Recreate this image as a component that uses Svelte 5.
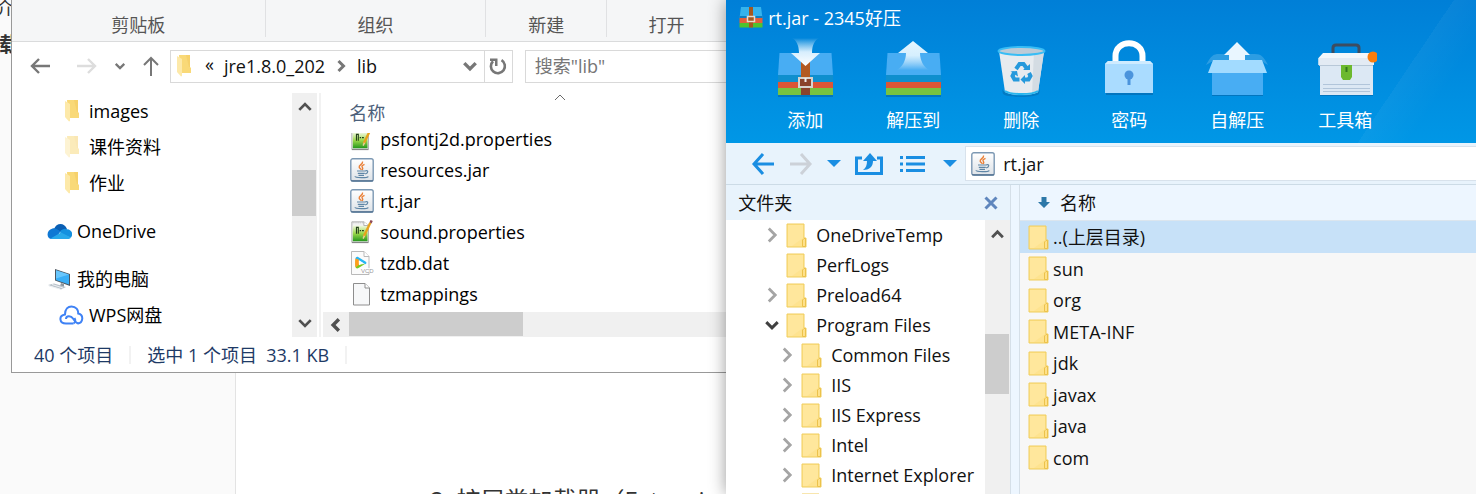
<script>
  const ribbonGroups = [
    { name: '剪贴板', grow: 254 },
    { name: '组织', grow: 221 },
    { name: '新建', grow: 120 },
    { name: '打开', grow: 120 }
  ];
  const places = [
    { name: 'images', icon: 'folder', level: 2 },
    { name: '课件资料', icon: 'folder', level: 2, faded: true },
    { name: '作业', icon: 'folder', level: 2 },
    { name: 'OneDrive', icon: 'onedrive', level: 1, root: true },
    { name: '我的电脑', icon: 'computer', level: 1, root: true },
    { name: 'WPS网盘', icon: 'wps', level: 2 }
  ];
  const files = [
    { name: 'psfontj2d.properties', icon: 'props' },
    { name: 'resources.jar', icon: 'java' },
    { name: 'rt.jar', icon: 'java' },
    { name: 'sound.properties', icon: 'props' },
    { name: 'tzdb.dat', icon: 'video' },
    { name: 'tzmappings', icon: 'page' }
  ];
  const tools = [
    { name: '添加', icon: 'add' },
    { name: '解压到', icon: 'extract' },
    { name: '删除', icon: 'bin' },
    { name: '密码', icon: 'lock' },
    { name: '自解压', icon: 'sfx' },
    { name: '工具箱', icon: 'toolbox' }
  ];
  const tree = [
    { name: 'OneDriveTemp', state: 'closed' },
    { name: 'PerfLogs', state: 'leaf' },
    { name: 'Preload64', state: 'closed' },
    { name: 'Program Files', state: 'open' },
    { name: 'Common Files', state: 'closed', nested: true },
    { name: 'IIS', state: 'closed', nested: true },
    { name: 'IIS Express', state: 'closed', nested: true },
    { name: 'Intel', state: 'closed', nested: true },
    { name: 'Internet Explorer', state: 'closed', nested: true },
    { name: '', state: 'leaf', nested: true }
  ];
  const entries = ['..(上层目录)', 'sun', 'org', 'META-INF', 'jdk', 'javax', 'java', 'com'];
  let selected = $state(0);
  let query = $state('');
  let path = $state('rt.jar');
</script>

{#snippet folder(faded)}
  <svg class="folder" class:faded width="14" height="22" viewBox="0 0 14 22" aria-hidden="true">
    <path d="M2 0h11v12l1 1v5H3z" fill="#f9d978" />
    <path d="M9 0h4v12h-1z" fill="#f4cb63" opacity=".6" />
    <path d="M0 1l5 3v17l-1 .5L0 17z" fill="#fde9a9" />
  </svg>
{/snippet}

{#snippet flatFolder()}
  <svg class="flat" width="21" height="25" viewBox="0 0 21 25" aria-hidden="true">
    <path d="M1 1h17v14h2v9H1z" fill="#fee38f" stroke="#f0cd5c" />
    <path d="M2 2h15v13L6 23H2z" fill="#ffe9a5" opacity=".6" />
    <path d="M16.5 23.500v-6.500l1.500-1.500h1.500v8z" fill="#fee18a" stroke="#ecc24b" />
  </svg>
{/snippet}

{#snippet chevron(dir, size, color, weight)}
  <svg class="chev {dir}" width={size} height={size} viewBox="0 0 14 14" aria-hidden="true">
    <path d="M2 4.500l5 5 5-5" fill="none" stroke={color} stroke-width={weight} />
  </svg>
{/snippet}

{#snippet java()}
  <svg width="24" height="24" viewBox="0 0 24 24" aria-hidden="true">
    <defs>
      <linearGradient id="jar" x1="0" y1="0" x2="0" y2="1">
        <stop offset="0" stop-color="#fff" /><stop offset="1" stop-color="#dde2e7" />
      </linearGradient>
    </defs>
    <rect x=".8" y=".8" width="22.400" height="22.400" rx="2" fill="url(#jar)" stroke="#7c98b3" stroke-width="1.400" />
    <path d="M1 22.800h22" stroke="#4f6f8f" stroke-width="1.200" />
    <path d="M12.500 3.500c1 2.500-4 3.600-3.300 5.700.3 1 1.600 1.600 2 2.600M14.500 6.300c-2.800 1.200-3 2-2 3.400.6.900.2 1.600-.4 2.300" fill="none" stroke="#ea8038" stroke-width="1.400" />
    <path d="M7 13h8.500M7.800 15.300h7M8.500 17.300h5.500M15.500 12.800c3-.8 3 2.200-.3 3M5 18.300c0 1.800 12.500 1.800 13.300.2" fill="none" stroke="#5f86a6" stroke-width="1.200" />
  </svg>
{/snippet}

{#snippet fileIcon(kind)}
  {#if kind === 'java'}
    {@render java()}
  {:else if kind === 'props'}
    <svg width="24" height="24" viewBox="0 0 24 26" aria-hidden="true">
      <defs>
        <linearGradient id="grass" x1="0" y1="0" x2="0" y2="1">
          <stop offset="0" stop-color="#f2f9e4" /><stop offset=".5" stop-color="#9bd84a" /><stop offset="1" stop-color="#24971c" />
        </linearGradient>
      </defs>
      <path d="M1 2h13l5 4v18H1z" fill="#f2f2f2" stroke="#aaa" />
      <path d="M2 3h12" stroke="#bbb" stroke-dasharray="1 1" />
      <path d="M2 6h16v17H2z" fill="url(#grass)" />
      <path d="M14 2v4h5" fill="#fff" stroke="#aaa" />
      <path d="M1 24.500h18" stroke="#777" />
      <path d="M6 15V8h2v7M9.500 11.500h1.500M12 11.500h2" fill="none" stroke="#23401a" stroke-width="1.200" />
      <path d="M21 3l-7 15" stroke="#e8a21d" stroke-width="2.600" />
      <path d="M22.500 .500l-1.300 2.600" stroke="#8f4a55" stroke-width="2.600" />
      <path d="M14.600 17l-1.400 3.200" stroke="#eacf9b" stroke-width="1.500" />
    </svg>
  {:else if kind === 'video'}
    <svg width="24" height="24" viewBox="0 0 24 24" aria-hidden="true">
      <path d="M1.500 .500H14l5 5v18H1.500z" fill="#fbfbfb" stroke="#b9b9b9" />
      <path d="M14 .500v5h5" fill="#fff" stroke="#b9b9b9" />
      <path d="M5.500 8c0-2 1.500-2.700 3-1.800l7 4.300c1.300.8 1.300 1.900 0 2.700z" fill="#26b6f3" />
      <path d="M5.500 8v7c0 2.300 1.500 3 3 2l6.800-4.200-6.500 1z" fill="#75c822" />
      <path d="M5.500 7.500C5 9 5 14 5.500 16.500L8.800 14V8.500z" fill="#ff9d1c" />
      <path d="M9 9.200l4 2.500-4 2.500z" fill="#fff" />
      <path d="M11 17h12v5H11z" fill="#fff" opacity=".8" />
      <text x="11" y="22" class="vcd">VCD</text>
    </svg>
  {:else}
    <svg width="24" height="24" viewBox="0 0 24 24" aria-hidden="true">
      <path d="M3.500 1.500H15l4.500 4.500v17h-16z" fill="#f7f8f9" stroke="#8e8e8e" />
      <path d="M15 1.500V6h4.500" fill="#fff" stroke="#8e8e8e" />
    </svg>
  {/if}
{/snippet}

{#snippet placeIcon(kind, faded)}
  {#if kind === 'folder'}
    {@render folder(faded)}
  {:else if kind === 'onedrive'}
    <svg width="25" height="17" viewBox="0 0 25 17" aria-hidden="true">
      <path d="M7 6C9 0 17-1.500 20 6l-4 4z" fill="#0a5fb4" />
      <path d="M5 16C-1 16-1 7 5.500 5.500c3-.7 5 1 8 3L8 16z" fill="#0f78d4" />
      <path d="M13 8.500C15 6 18 5 20 6.200c5 .3 6.500 5 4 8.300L14 12z" fill="#1490df" />
      <path d="M3.500 15.500L14 9.500l10 5c-.7 1-2 1.500-3.500 1.500H5c-.6 0-1-.2-1.500-.5z" fill="#28a8ea" />
    </svg>
  {:else if kind === 'computer'}
    <svg width="25" height="22" viewBox="0 0 25 22" aria-hidden="true">
      <path d="M8 1l15 5v12L8 12.500z" fill="#4d565f" />
      <path d="M9 2.300l13 4.200v10L9 12z" fill="#39aef6" />
      <path d="M9 2.300l13 4.200-13 4z" fill="#7cd0ff" opacity=".7" />
      <path d="M14 15l3 1v3l-4-1z" fill="#8d969e" />
      <path d="M1 17l6-1.500L19 19l-5 2.500z" fill="#b9c2ca" />
      <path d="M2 18l11 3M5 16.500l11 3.500" stroke="#edf0f3" />
    </svg>
  {:else}
    <svg width="25" height="20" viewBox="0 0 25 20" aria-hidden="true">
      <path d="M14.500 18.500H7c-7 0-7.500-8-1-9C6 4 9 1.500 12.500 1.500c4.500 0 7 3.500 6.700 7 6 1.500 5 9.500-.7 10" fill="none" stroke="#3f82f5" stroke-width="2" />
      <path d="M7 14c0-3.500 5-3.500 7-.5s4.500 5.500 6 4.500" fill="none" stroke="#3f82f5" stroke-width="2" />
      <path d="M14.500 18.500c1.800-1 2.500-3.500 1-5.500" fill="none" stroke="#3f82f5" stroke-width="2" />
    </svg>
  {/if}
{/snippet}

{#snippet bigIcon(kind)}
  <svg width="64" height="62" viewBox="0 0 64 62" aria-hidden="true">
    {#if kind === 'add' || kind === 'extract'}
      <defs>
        <linearGradient id="down" x1="0" y1="0" x2="0" y2="1">
          <stop offset="0" stop-color="#fff" stop-opacity="0" /><stop offset=".5" stop-color="#d7eefd" /><stop offset="1" stop-color="#fff" />
        </linearGradient>
        <linearGradient id="up" x1="0" y1="0" x2="0" y2="1">
          <stop offset="0" stop-color="#e6f6ff" /><stop offset=".5" stop-color="#d5effe" /><stop offset="1" stop-color="#fff" stop-opacity="0" />
        </linearGradient>
      </defs>
      <path d="M5 58h55v2H5z" fill="#035b9d" opacity=".5" />
      <path d="M6.500 16h52L60 38H5z" fill="#48adf3" />
      <path d="M5 38h55v7H5z" fill="#0f8fce" />
      <path d="M5 45h55v6H5z" fill="#dc5536" />
      <path d="M5 51h55v7H5z" fill="#78c340" />
      {#if kind === 'add'}
        <path d="M28 25h9v33h-9z" fill="#b35a22" />
        <path d="M28 44h9v14h-9z" fill="#8b432b" />
        <rect x="26" y="41" width="13" height="9" fill="#8b432b" stroke="#d7d3cf" stroke-width="2" />
        <path d="M32.500 41v4" stroke="#eee" stroke-width="2" />
        <path d="M19 1h27c-4 2-7 7-7 15h8L32.500 29 18 16h8c0-8-3-13-7-15z" fill="url(#down)" />
      {:else}
        <path d="M32 4l15 12h-8c0 8 4 14 9 17H16c5-3 9-9 9-17h-8z" fill="url(#up)" />
      {/if}
    {:else if kind === 'bin'}
      <path d="M13 52c5 9 34 9 38 0l-1 5c-5 4-31 4-36 0z" fill="#0467a8" opacity=".5" />
      <path d="M10 14h45l-6 41c-6 4-27 4-33 0z" fill="#e7ebef" />
      <path d="M45 15h10l-6 40-6 2z" fill="#d4dce3" />
      <ellipse cx="32.500" cy="14" rx="23" ry="4" fill="#bccbd7" stroke="#38bdf5" stroke-width="2" />
      <path d="M16 54c6 4 27 4 33 0" fill="none" stroke="#28b6ee" stroke-width="2" />
      <g fill="none" stroke="#2599dc" stroke-width="4">
        <path d="M27 32l3.500-5h4l3 4" />
        <path d="M25.500 35l-2 4 2 3.500h5" />
        <path d="M40 36l1.500 3-2 3.500H36" />
      </g>
      <path d="M34 33h7v-6zM21.500 34.500l6.500-.5 1 5.500zM36 38v9l-4.500-4.500z" fill="#2599dc" />
    {:else if kind === 'lock'}
      <path d="M9 56h47v2H9z" fill="#035b9d" opacity=".5" />
      <path d="M18.500 26v-7c0-17 27-17 27 0v7" fill="none" stroke="#fff" stroke-width="6" />
      <path d="M11 24h42l3 3v29H8V27z" fill="#aadcff" />
      <path d="M11 24h42l3 3H8z" fill="#ceebff" />
      <circle cx="32" cy="38" r="4.500" fill="#4b94dc" />
      <path d="M32 38v10" stroke="#4b94dc" stroke-width="3" />
    {:else if kind === 'sfx'}
      <path d="M7 57h51v2H7z" fill="#035b9d" opacity=".5" />
      <path d="M1 28c5-9 7-11 13-11h36c6 0 9 3 13 11l-7-4H8z" fill="#2c9de3" />
      <path d="M32 5l13 13h-5v6H24v-6h-5z" fill="#e9f6ff" />
      <path d="M7 34h51v24H7z" fill="#48adf3" />
      <path d="M8 23h49l5 13H3z" fill="#a2dbff" />
    {:else}
      <path d="M7 57h53v2H7z" fill="#035b9d" opacity=".5" />
      <path d="M20 17v-6c0-2 1-3 3-3h20c2 0 3 1 3 3v6" fill="none" stroke="#3d4d61" stroke-width="3" />
      <path d="M7 28h53v30H7z" fill="#dce8f4" />
      <path d="M10 16h47l4 5v7H5.500v-7z" fill="#f3f7fb" />
      <path d="M5.500 21h55v7h-55z" fill="#e3ebf4" />
      <path d="M6 28.500h54" stroke="#b8c8d8" />
      <path d="M10 47.500h47M10 51.500h47M10 54.500h47" stroke="#b1c5da" />
      <path d="M28 28h11v12l-2 3h-7l-2-3z" fill="#6cb92e" />
      <path d="M33.500 30v5" stroke="#35781c" stroke-width="2" />
      <circle cx="60" cy="20" r="5.500" fill="#fb7d0b" />
    {/if}
  </svg>
{/snippet}

<div class="desktop">
  <div class="document">
    <aside>
      <p>介</p>
      <p class="strong">载</p>
    </aside>
    <article>
      <h2>2. 扩展类加载器（Extensi</h2>
    </article>
  </div>

  <section class="explorer" aria-label="lib">
    <div class="ribbon">
      {#each ribbonGroups as g}
        <div class="group" style:flex-grow={g.grow}>{g.name}</div>
      {/each}
    </div>

    <div class="navrow">
      <button class="back" aria-label="后退">
        <svg width="20" height="16" viewBox="0 0 20 16"><path d="M9 1L2 8l7 7M2 8h18" fill="none" stroke="#777" stroke-width="2.400" /></svg>
      </button>
      <button class="forward" aria-label="前进">
        <svg width="20" height="16" viewBox="0 0 20 16"><path d="M11 1l7 7-7 7M18 8H0" fill="none" stroke="#ddd" stroke-width="2.400" /></svg>
      </button>
      <button class="recent" aria-label="最近位置">{@render chevron('down', 12, '#777', 2.6)}</button>
      <button class="up" aria-label="上移">
        <svg width="16" height="20" viewBox="0 0 16 20"><path d="M1 9l7-7 7 7M8 2v18" fill="none" stroke="#777" stroke-width="2" /></svg>
      </button>
      <div class="address">
        {@render folder(false)}
        <span class="laquo">«</span>
        <button class="crumb">jre1.8.0_202</button>
        {@render chevron('right', 14, '#777', 3)}
        <button class="crumb">lib</button>
        <button class="drop" aria-label="历史">{@render chevron('down', 16, '#777', 3)}</button>
        <button class="refresh" aria-label="刷新">
          <svg width="18" height="18" viewBox="0 0 18 18"><path d="M12.500 3.200A7 7 0 1 1 4 4.200" fill="none" stroke="#777" stroke-width="2.600" /><path d="M1 1.500h7.500V9H6V4H1z" fill="#777" /></svg>
        </button>
      </div>
      <input class="search" type="search" aria-label="搜索" placeholder={'搜索"lib"'} bind:value={query} />
    </div>

    <div class="panes">
      <nav>
        <ul>
          {#each places as p}
            <li class="level{p.level}" class:root={p.root}>
              <span class="slot">{@render placeIcon(p.icon, p.faded)}</span>
              <span>{p.name}</span>
            </li>
          {/each}
        </ul>
        <div class="vbar">
          <button aria-label="向上滚动">{@render chevron('upward', 16, '#505050', 2.4)}</button>
          <div class="track"><div class="thumb"></div></div>
          <button aria-label="向下滚动">{@render chevron('down', 16, '#505050', 2.4)}</button>
        </div>
      </nav>
      <div class="files">
        <div class="colhead">
          <button>名称</button>
          <svg width="12" height="7" viewBox="0 0 12 7" aria-hidden="true"><path d="M1 6l5-5 5 5" fill="none" stroke="#6b6b6b" /></svg>
        </div>
        <div class="listing">
          <ul>
            {#each files as f}
              <li>{@render fileIcon(f.icon)}<span>{f.name}</span></li>
            {/each}
          </ul>
        </div>
        <div class="hbar">
          <button aria-label="向左滚动">{@render chevron('left', 16, '#505050', 3)}</button>
          <div class="hthumb"></div>
        </div>
      </div>
    </div>

    <footer>
      <span>40 个项目</span>
      <span>选中 1 个项目&nbsp; 33.1 KB</span>
    </footer>
  </section>

  <section class="archiver" aria-label="2345好压">
    <header>
      <div class="title">
        <svg width="24" height="21" viewBox="0 0 24 21" aria-hidden="true">
          <path d="M2 0h20l1.500 11H.500z" fill="#35b3ec" />
          <path d="M.500 9h23v3H.500z" fill="#0d7fc0" />
          <path d="M.500 11h23v5H.500z" fill="#e2603c" />
          <path d="M.500 16h23v4.500H.500z" fill="#4fc32f" />
          <path d="M10 0h4v20.500h-4z" fill="#a4581f" />
          <rect x="8.500" y="9.500" width="7" height="5" fill="#a4581f" stroke="#e7dcd2" stroke-width="1.500" />
        </svg>
        <h1>rt.jar - 2345好压</h1>
      </div>
      <div class="tools">
        {#each tools as t}
          <button>{@render bigIcon(t.icon)}<span>{t.name}</span></button>
        {/each}
      </div>
    </header>

    <div class="pathrow">
      <button aria-label="后退">
        <svg width="24" height="24" viewBox="0 0 24 24"><path d="M12 2L3 12l9 10M3 12h20" fill="none" stroke="#1a8ee2" stroke-width="3" /></svg>
      </button>
      <button aria-label="前进">
        <svg width="24" height="24" viewBox="0 0 24 24"><path d="M12 2l9 10-9 10M21 12H1" fill="none" stroke="#ccd1d8" stroke-width="3" /></svg>
      </button>
      <button aria-label="历史">
        <svg width="14" height="7" viewBox="0 0 14 7"><path d="M0 0h14L7 7z" fill="#1a8ee2" /></svg>
      </button>
      <button aria-label="上层目录">
        <svg width="28" height="24" viewBox="0 0 28 24">
          <path d="M7 6H1.500v15.500h25V6H22" fill="none" stroke="#1a8ee2" stroke-width="3" />
          <path d="M15 1l7 8h-4c0 6-4 9-10 9 3-2 4-5 4-9H8z" fill="#1a8ee2" />
        </svg>
      </button>
      <button aria-label="视图">
        <svg width="26" height="18" viewBox="0 0 26 18"><path d="M0 2.500h3M0 9h3M0 15.500h3M6 2.500h19M6 9h19M6 15.500h19" stroke="#1a8ee2" stroke-width="3" /></svg>
      </button>
      <button aria-label="视图选项">
        <svg width="14" height="7" viewBox="0 0 14 7"><path d="M0 0h14L7 7z" fill="#1a8ee2" /></svg>
      </button>
      <label class="pathbox">
        {@render java()}
        <input aria-label="路径" bind:value={path} />
      </label>
    </div>

    <div class="split">
      <div class="folders">
        <div class="panehead">
          <span>文件夹</span>
          <button aria-label="关闭">
            <svg width="14" height="14" viewBox="0 0 14 14"><path d="M1.500 1.500l11 11M12.500 1.500l-11 11" stroke="#5f86bd" stroke-width="3" /></svg>
          </button>
        </div>
        <div class="treebox">
          <ul>
            {#each tree as n}
              <li class:nested={n.nested}>
                <span class="toggle">
                  {#if n.state === 'closed'}{@render chevron('right', 18, '#a5a5a5', 2.2)}{/if}
                  {#if n.state === 'open'}{@render chevron('down', 16, '#404040', 2.6)}{/if}
                </span>
                {@render flatFolder()}
                <span>{n.name}</span>
              </li>
            {/each}
          </ul>
          <div class="vbar">
            <button aria-label="向上滚动">{@render chevron('upward', 15, '#505050', 2.6)}</button>
            <div class="track"><div class="thumb"></div></div>
          </div>
        </div>
      </div>
      <div class="contents">
        <div class="panehead">
          <svg width="12" height="11" viewBox="0 0 12 11" aria-hidden="true"><path d="M3.500 0h5v5H12l-6 6-6-6h3.500z" fill="#2d78a8" /></svg>
          <span>名称</span>
        </div>
        <ul>
          {#each entries as e, i}
            <li>
              <button class:selected={selected === i} onclick={() => (selected = i)}>
                {@render flatFolder()}<span>{e}</span>
              </button>
            </li>
          {/each}
        </ul>
      </div>
    </div>
  </section>
</div>

<style>
  :global(body) { margin: 0; }
  .desktop {
    position: relative;
    height: 100vh;
    overflow: hidden;
    background: #fff;
    font-family: 'Open Sans', 'Noto Sans CJK SC', sans-serif;
    font-size: 18px;
    line-height: 24px;
    color: #111;
  }
  .desktop * { box-sizing: border-box; }
  button {
    border: 0;
    padding: 0;
    background: none;
    font: inherit;
    color: inherit;
    display: flex;
    align-items: center;
    justify-content: center;
  }
  ul { list-style: none; margin: 0; padding: 0; }
  svg { display: block; flex: none; }
  .chev.right { transform: rotate(-90deg); }
  .chev.left { transform: rotate(90deg); }
  .chev.upward { transform: rotate(180deg); }
  .faded { opacity: .5; }
  .vcd { font: 6px 'Liberation Sans', sans-serif; fill: #999; }

  .document { display: flex; height: 100%; }
  aside {
    flex: 0 0 16%;
    background: #fafafa;
    border-right: 1px solid #e3e3e3;
    overflow: hidden;
    color: #333;
  }
  aside p { margin: -4px 0 0 -4px; }
  aside .strong { margin: 13px 0 0 -1px; font-size: 20px; font-weight: 700; }
  article { flex: 1; padding: 484px 0 0 194px; color: #333; overflow: hidden; }
  h2 { margin: 0; font-size: 24px; line-height: 32px; font-weight: 400; white-space: nowrap; }

  .explorer {
    position: absolute;
    left: 11px;
    right: 50.8%;
    top: 0;
    display: flex;
    flex-direction: column;
    background: #fff;
    border: solid #999;
    border-width: 0 0 1px 1px;
  }
  .ribbon {
    display: flex;
    height: 42px;
    padding-bottom: 4px;
    background: #f5f6f7;
    border-bottom: 1px solid #dadbdc;
    color: #555;
  }
  .group {
    flex-basis: 0;
    display: flex;
    align-items: center;
    justify-content: center;
    padding-top: 12px;
    border-right: 1px solid #e0e1e3;
  }
  .group:last-child { border-right: 0; }
  .navrow { display: flex; align-items: center; padding-top: 8px; height: 40px; }
  .back { margin-left: 18px; }
  .forward { margin-left: 27px; }
  .recent { margin-left: 17px; }
  .up { margin: 0 11px 0 17px; }
  .address {
    flex: 0 0 48%;
    display: flex;
    align-items: center;
    height: 33px;
    padding-left: 6px;
    border: 1px solid #d9d9d9;
  }
  .laquo { margin: 0 10px 4px 14px; }
  .crumb { color: #111; }
  .crumb + .chev { margin: 0 9px; }
  .drop { margin-left: auto; padding-right: 6px; height: 100%; }
  .refresh { width: 28px; height: 100%; border-left: 1px solid #d9d9d9; }
  .search {
    flex: 1;
    min-width: 0;
    height: 33px;
    margin: 0 0 0 12px;
    padding: 0 9px;
    border: 1px solid #d9d9d9;
    border-right: 0;
    border-radius: 0;
    background: #fff;
    font: inherit;
    appearance: none;
  }
  .search::placeholder { color: #767676; opacity: 1; }

  .panes { display: flex; height: 244px; margin-top: 11px; }
  nav { flex: 0 0 43.3%; display: flex; overflow: hidden; border-right: 2px solid #f2f2f2; }
  nav ul { flex: 1; min-width: 0; }
  nav li { display: flex; align-items: center; height: 36px; color: #000; }
  nav .root { margin-top: 12px; }
  .slot { display: flex; width: 25px; justify-content: center; margin-right: 5px; }
  .level1 { padding-left: 35px; }
  .level2 { padding-left: 47px; }
  .vbar {
    flex: 0 0 25px;
    display: flex;
    flex-direction: column;
    background: #f0f0f0;
  }
  nav .vbar { margin-right: 2px; }
  .vbar button { flex: 0 0 28px; }
  .track { flex: 1; }
  .thumb { width: 24px; background: #cdcdcd; }
  nav .thumb { height: 46px; margin-top: 49px; }

  .files { flex: 1; min-width: 0; display: flex; flex-direction: column; }
  .colhead { display: flex; align-items: flex-start; height: 40px; }
  .colhead button { margin: 8px auto 0 28px; color: #4c607a; }
  .colhead svg { margin: 1px 160px 0 0; }
  .listing { flex: 1; overflow: hidden; }
  .listing ul { margin-top: -10px; }
  .listing li { display: flex; align-items: center; gap: 6px; height: 31px; padding-left: 29px; color: #000; }
  .hbar { display: flex; height: 25px; margin-left: 2px; background: #f0f0f0; }
  .hbar button { flex: 0 0 26px; }
  .hthumb { flex: 0 0 43%; height: 24px; background: #cdcdcd; }

  footer { display: flex; align-items: center; height: 35px; padding-left: 22px; color: #1e3a66; }
  footer span { padding-right: 16px; margin-right: 16px; border-right: 2px solid #f2f2f2; line-height: 18px; }

  .archiver {
    position: absolute;
    left: 49.2%;
    right: 0;
    top: 0;
    bottom: 0;
    display: flex;
    flex-direction: column;
    background: #f7f7f7;
    box-shadow: 0 0 16px rgba(0, 0, 0, .4);
  }
  header {
    flex: none;
    height: 143px;
    background:
      linear-gradient(124deg, transparent 86%, rgba(255, 255, 255, .04) 86%, transparent 92%),
      linear-gradient(#007fd7, #0097e6);
    color: #fff;
  }
  .title { display: flex; align-items: center; gap: 5px; padding: 3px 0 0 13px; height: 32px; }
  h1 { margin: 0; font-size: 18px; line-height: 24px; font-weight: 400; }
  .tools { display: flex; padding-left: 25px; margin-top: 5px; }
  .tools button { flex: 0 0 108px; flex-direction: column; gap: 9px; }

  .pathrow {
    flex: none;
    display: flex;
    align-items: center;
    height: 42px;
    padding-left: 25px;
    background: #e8f3fc;
    border-bottom: 1px solid #ccdbe6;
  }
  .pathrow button + button { margin-left: 14px; }
  .pathbox {
    flex: 1;
    display: flex;
    align-items: center;
    gap: 8px;
    height: 35px;
    margin-left: 8px;
    padding-left: 5px;
    background: #fff;
    border: 1px solid #d8e2ec;
    border-right: 0;
  }
  .pathrow button:nth-child(n + 5) { margin-left: 17px; }
  .pathbox input { flex: 1; border: 0; padding: 0; outline: 0; background: none; font: inherit; color: #111; }

  .split { flex: 1; min-height: 0; display: flex; background: #edf6ff; }
  .folders { flex: 0 0 38%; min-width: 0; display: flex; flex-direction: column; border-right: 1px solid #d5dfe8; }
  .panehead { flex: none; display: flex; align-items: center; height: 35px; background: #e8f3fc; }
  .folders .panehead { padding: 0 12px; justify-content: space-between; }
  .treebox { flex: 1; min-height: 0; display: flex; overflow: hidden; background: #fff; }
  .treebox ul { flex: 1; min-width: 0; overflow: hidden; }
  .treebox li { display: flex; align-items: center; height: 30px; padding-left: 37px; white-space: nowrap; }
  .treebox .nested { padding-left: 52px; }
  .toggle { display: flex; flex: 0 0 18px; justify-content: center; margin-right: 5px; }
  .treebox .flat { margin-right: 9px; }
  .treebox .thumb { height: 60px; margin-top: 86px; }

  .contents { flex: 1; min-width: 0; margin-left: 8px; border-left: 1px solid #d5dfe8; background: #f7f7f7; }
  .contents .panehead { height: 36px; padding-left: 18px; gap: 10px; background: #edf6ff; border-bottom: 1px solid #dbe5ee; }
  .contents li { height: 31px; }
  .contents li:nth-child(odd) { height: 32px; }
  .contents li button { width: 100%; height: 100%; justify-content: flex-start; gap: 4px; padding-left: 8px; }
  .contents .selected { background: #c7e1f8; }
</style>
